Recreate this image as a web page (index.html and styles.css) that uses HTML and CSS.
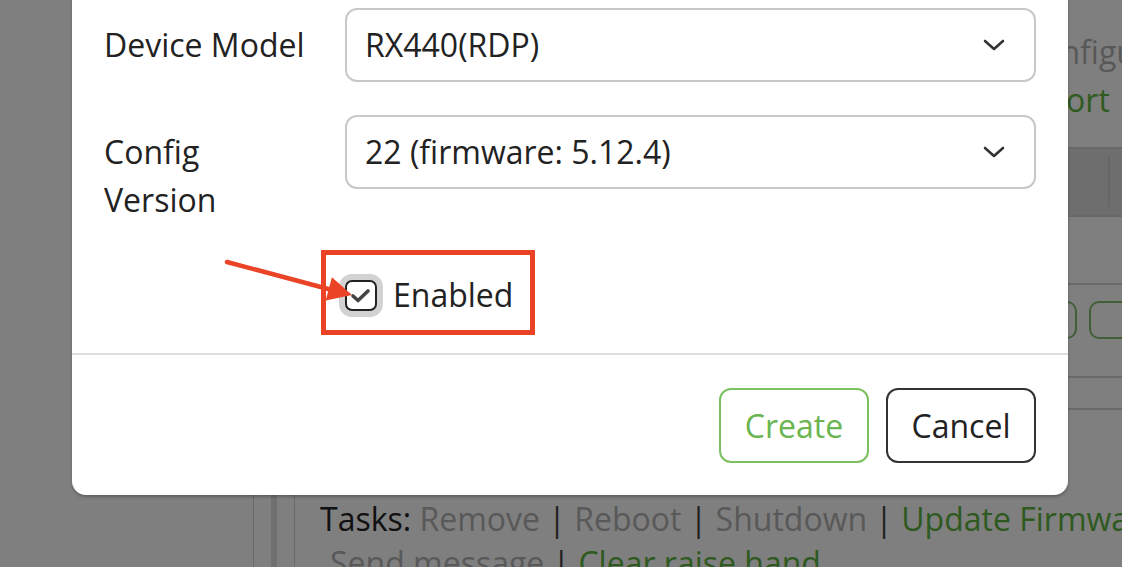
FILE: index.html
```html
<!DOCTYPE html>
<html lang="en">
<head>
    <meta charset="UTF-8">
    <meta name="viewport" content="width=device-width, initial-scale=1.0">
    <title>Create Device</title>
    <link rel="stylesheet" href="styles.css">
</head>
<body>

    <div class="page">
        <div class="sidebar"></div>
        <div class="main">
            <div class="panel">
                <div class="card">
                    <div class="card-head">
                        <div class="links">
                            <div class="link-muted configure">Configure</div>
                            <div class="link-green">Export</div>
                        </div>
                    </div>
                    <div class="table">
                        <div class="thead">
                            <div class="th"></div>
                            <div class="th"></div>
                        </div>
                        <div class="tr tr-empty"></div>
                        <div class="tr tr-actions">
                            <span class="mini-btn"></span>
                            <span class="mini-btn wide"></span>
                        </div>
                        <div class="tr tr-thin"></div>
                    </div>
                    <div class="tasks">
                        <div class="task-line"><span class="task-title">Tasks:</span> <span class="task-off">Remove</span> <span class="sep">|</span> <span class="task-off">Reboot</span> <span class="sep">|</span> <span class="task-off">Shutdown</span> <span class="sep">|</span> <span class="task-on">Update Firmware</span> <span class="sep">|</span></div>
                        <div class="task-line indent"><span class="task-off">Send message</span> <span class="sep">|</span> <span class="task-on">Clear raise hand</span></div>
                    </div>
                </div>
            </div>
        </div>
    </div>

    <div class="backdrop"></div>

    <div class="modal">
        <div class="modal-body">
            <div class="form-row">
                <label class="form-label">Device Model</label>
                <div class="select">
                    <span>RX440(RDP)</span>
                    <svg class="chevron" width="22" height="12" viewBox="0 0 22 12"><path d="M2 2 L11 10 L20 2" fill="none" stroke="#333" stroke-width="2.6" stroke-linecap="round" stroke-linejoin="round"/></svg>
                </div>
            </div>
            <div class="form-row">
                <label class="form-label">Config Version</label>
                <div class="select">
                    <span>22 (firmware: 5.12.4)</span>
                    <svg class="chevron" width="22" height="12" viewBox="0 0 22 12"><path d="M2 2 L11 10 L20 2" fill="none" stroke="#333" stroke-width="2.6" stroke-linecap="round" stroke-linejoin="round"/></svg>
                </div>
            </div>
            <div class="form-row check-row">
                <div></div>
                <label class="check">
                    <span class="check-box">
                        <svg width="28" height="28" viewBox="0 0 28 28"><path d="M6 15 L11 19.5 L21 10" fill="none" stroke="#444" stroke-width="3.6" stroke-linecap="round" stroke-linejoin="round"/></svg>
                    </span>
                    <span>Enabled</span>
                </label>
            </div>
        </div>
        <div class="modal-footer">
            <button class="btn btn-create">Create</button>
            <button class="btn btn-cancel">Cancel</button>
        </div>
    </div>

    <svg class="annotation" width="1122" height="567" viewBox="0 0 1122 567">
        <rect x="323.5" y="252.5" width="209" height="80" fill="none" stroke="#ea4325" stroke-width="5"/>
        <line x1="227" y1="262" x2="332" y2="290" stroke="#ea4325" stroke-width="4.5" stroke-linecap="round"/>
        <polygon points="352,295 325.7,300.5 331.9,277.3" fill="#ea4325"/>
    </svg>

</body>
</html>
```

FILE: styles.css
```css
* {
    margin: 0;
    padding: 0;
    box-sizing: border-box;
    font-family: 'Open Sans', sans-serif;
}

body {
    width: 1122px;
    height: 567px;
    overflow: hidden;
    position: relative;
    background: #fff;
    color: #222;
    font-size: 32px;
    line-height: 48px;
}

/* page behind the dialog */

.page {
    display: flex;
    min-height: 567px;
}

.sidebar {
    width: 253px;
    flex-shrink: 0;
}

.main {
    flex: 1;
    border-left: 1px solid #d4d4d4;
    padding-left: 17px;
}

.panel {
    border-left: 6px solid #e0e0e0;
    padding-left: 17px;
    height: 100%;
}

.card {
    border-left: 1px solid #d4d4d4;
    padding-left: 25px;
    height: 100%;
    white-space: nowrap;
}

.card-head {
    padding: 28px 0 23px;
}

.links {
    margin-left: 692px;
}

.configure {
    padding-left: 9px;
}

.link-muted {
    color: #b0b0b0;
}

.link-green {
    color: #5fb640;
}

.thead {
    display: flex;
    height: 70px;
    background: #dddddd;
    border-top: 2px solid #d2d2d2;
    border-bottom: 2px solid #d2d2d2;
    margin-left: -26px;
}

.th {
    height: 50px;
    margin-top: 8px;
}

.th:first-child {
    width: 816px;
    border-right: 2px solid #cdcdcd;
}

.tr {
    border-bottom: 2px solid #d4d4d4;
    margin-left: -26px;
}

.tr-empty {
    height: 68px;
}

.tr-actions {
    height: 93px;
    display: flex;
    gap: 12px;
    padding: 16px 0 0 723px;
}

.mini-btn {
    width: 60px;
    height: 38px;
    border: 2px solid #86bd6c;
    border-radius: 10px;
}

.mini-btn.wide {
    width: 90px;
}

.tr-thin {
    height: 32px;
}

.tasks {
    margin-top: 87px;
    line-height: 44px;
    font-size: 32px;
}

.task-line.indent {
    padding-left: 10px;
}

.task-title {
    color: #222;
}

.task-off {
    color: #b2b2b2;
}

.sep {
    color: #444;
}

.task-on {
    color: #5db33f;
}

/* dialog */

.backdrop {
    position: absolute;
    inset: 0;
    background: rgba(0, 0, 0, 0.5);
}

.modal {
    position: absolute;
    left: 72px;
    top: -24px;
    width: 996px;
    background: #fff;
    border-radius: 14px;
    box-shadow: 0 2px 3px rgba(0, 0, 0, 0.25);
}

.modal-body {
    padding: 32px 32px 34px;
}

.form-row {
    display: grid;
    grid-template-columns: 209px 1fr;
    column-gap: 32px;
    align-items: start;
    margin-bottom: 33px;
}

.form-row:last-child {
    margin-bottom: 0;
}

.form-label {
    padding-top: 13px;
    color: #222;
}

.select {
    display: flex;
    justify-content: space-between;
    align-items: center;
    border: 2px solid #c8c8c8;
    border-radius: 12px;
    padding: 11px 29px 11px 18px;
    color: #222;
}

.chevron {
    display: block;
}

.check-row {
    padding-top: 14px;
}

.check {
    display: flex;
    align-items: center;
    gap: 16px;
}

.check-box {
    width: 32px;
    height: 31px;
    border: 2.5px solid #222;
    border-radius: 7px;
    background: #fff;
    box-shadow: 0 0 0 6px #d2d2d2;
    display: flex;
    align-items: center;
    justify-content: center;
}

.modal-footer {
    border-top: 2px solid #dedede;
    padding: 33px 32px 32px;
    display: flex;
    justify-content: flex-end;
    gap: 17px;
}

.btn {
    width: 150px;
    height: 75px;
    border-radius: 12px;
    background: #fff;
    font-size: 32px;
    line-height: 48px;
}

.btn-create {
    border: 2px solid #7cc160;
    color: #6ab54f;
}

.btn-cancel {
    border: 2px solid #333;
    color: #222;
}

.annotation {
    position: absolute;
    left: 0;
    top: 0;
    pointer-events: none;
}
```
